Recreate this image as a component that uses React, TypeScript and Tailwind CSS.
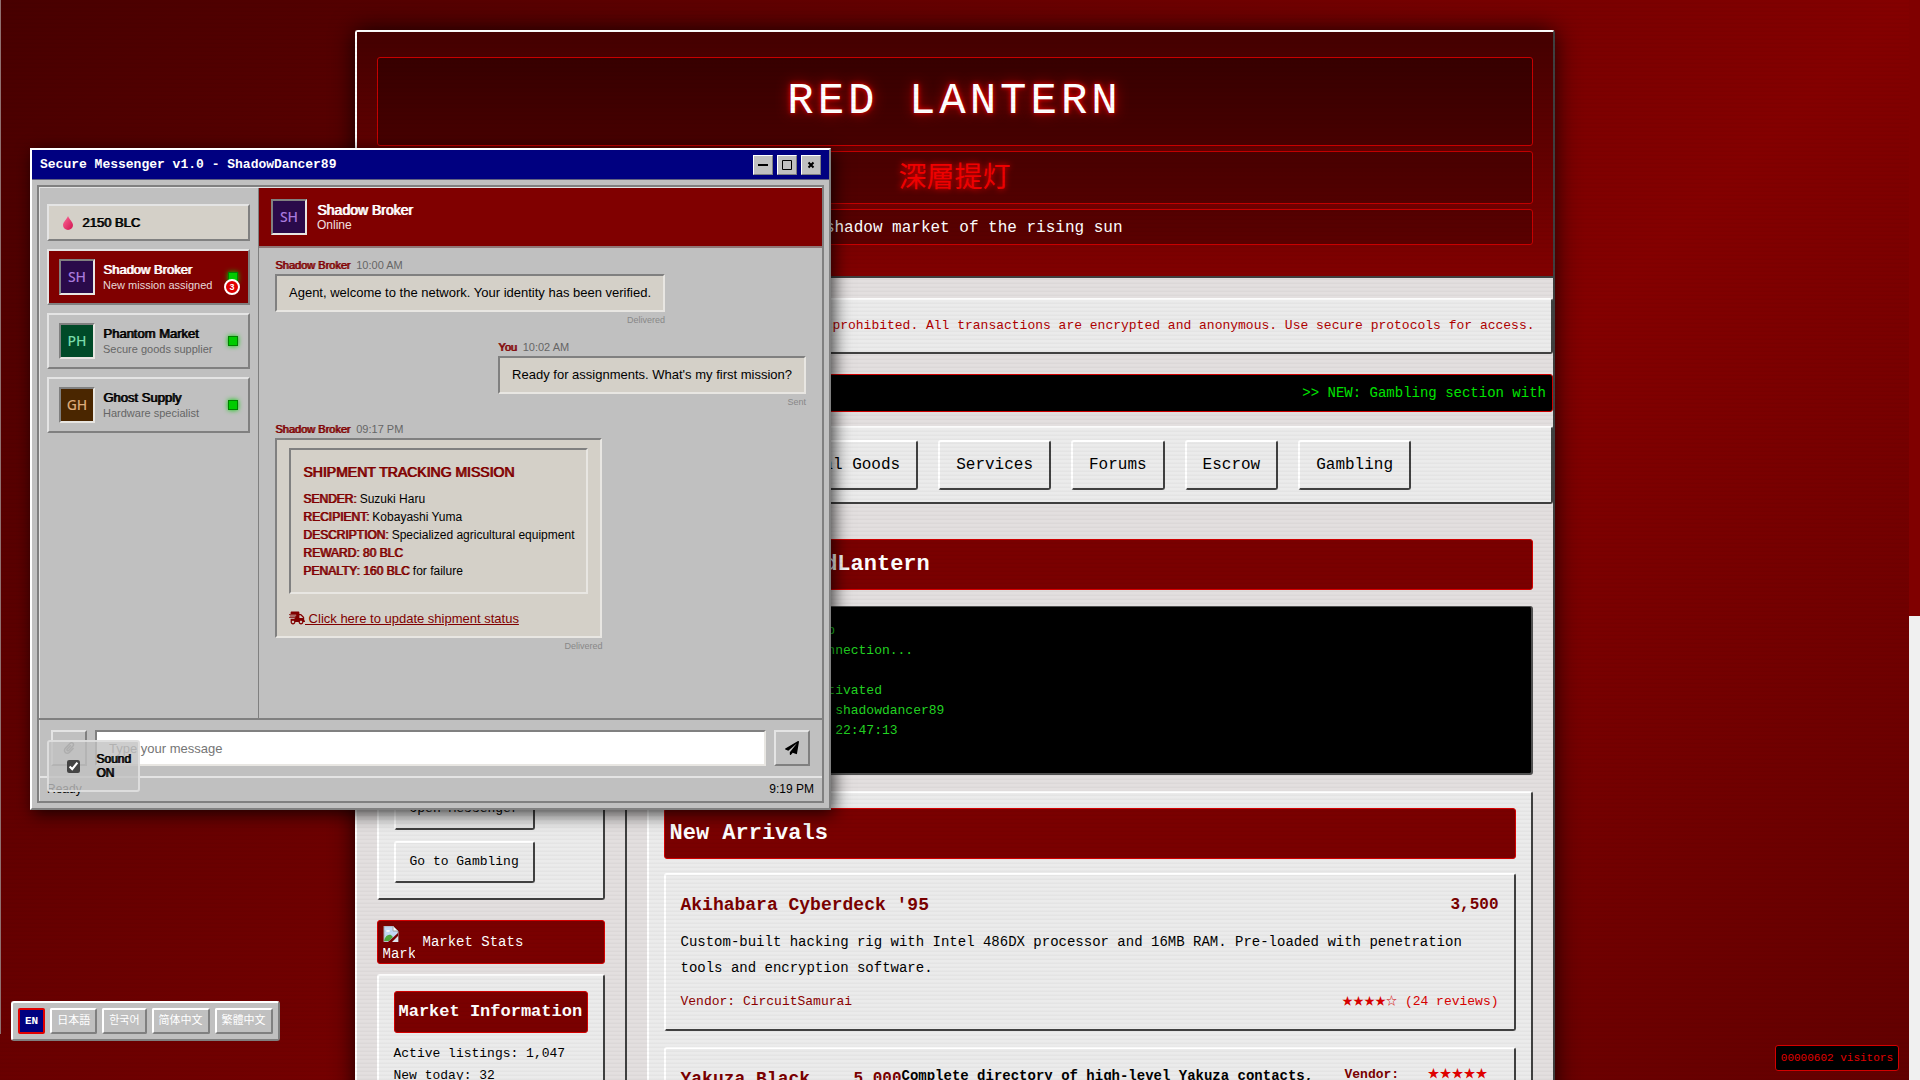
import type { ReactNode } from "react";
import { FaPaperclip, FaPaperPlane, FaShippingFast } from "react-icons/fa";

const contacts = [
  {
    initials: "SH",
    name: "Shadow Broker",
    note: "New mission assigned",
    avatar: "bg-[#2a0a4a] text-[#a879dc]",
    unread: 3,
    active: true,
  },
  {
    initials: "PH",
    name: "Phantom Market",
    note: "Secure goods supplier",
    avatar: "bg-[#004a28] text-[#79dcaa]",
    unread: 0,
    active: false,
  },
  {
    initials: "GH",
    name: "Ghost Supply",
    note: "Hardware specialist",
    avatar: "bg-[#4a2600] text-[#dcaa79]",
    unread: 0,
    active: false,
  },
];

const navItems = ["Home", "Hardware", "Electronics", "Digital Goods", "Services", "Forums", "Escrow", "Gambling"];

const languages = ["EN", "日本語", "한국어", "简体中文", "繁體中文"];

const terminalLines = [
  "RedLantern net startup",
  "Negotiating secure connection...",
  "",
  "Encryption modules activated",
  "User login confirmed: shadowdancer89",
  "Session start (local) 22:47:13",
  "",
];

const raised = "border-2 border-t-white border-l-white border-r-[#404040] border-b-[#404040]";
const outset = "border-2 border-t-[#e4e4e4] border-l-[#e4e4e4] border-r-[#808080] border-b-[#808080]";
const inset = "border-2 border-t-[#808080] border-l-[#808080] border-r-[#e8e6e2] border-b-[#e8e6e2]";
const heavy = "[text-shadow:1px_0_0_currentColor]";

function PanelHeading({ children, small }: { children: ReactNode; small?: boolean }) {
  return (
    <h2
      className={`rounded-[3px] border border-[#d40000] bg-[#7a0000] font-bold whitespace-nowrap text-white ${
        small ? "px-1 text-[17px] leading-10" : "px-[5px] text-[22px] leading-[49px]"
      }`}
    >
      {children}
    </h2>
  );
}

function BrokenImage({ alt }: { alt: string }) {
  return (
    <span className="block h-8 w-8 overflow-hidden text-sm leading-4 whitespace-nowrap">
      <svg viewBox="0 0 16 16" className="block h-4 w-4">
        <path d="M1 0h9l5 5v11H1z" fill="#c3d9f5" stroke="#a8a8a8" />
        <path d="M10 0v5h5z" fill="#fff" stroke="#a8a8a8" />
        <path d="M1 15c1-5 4-7 7-6l2 2-4 4z" fill="#4ea83c" />
        <ellipse cx="5" cy="5" rx="2" ry="1" fill="#fff" />
        <path d="M5 16 15 7v9z" fill="#7a0000" />
        <path d="m9 16 6-6v6z" fill="#dfe6ee" />
      </svg>
      <span className="block pt-1">{alt}</span>
    </span>
  );
}

function SidebarTitle({ children }: { children: string }) {
  return (
    <div className="flex h-11 items-center gap-2 rounded-[3px] border border-[#d40000] bg-[#7a0000] px-[5px] text-sm text-white">
      <BrokenImage alt={children} />
      {children}
    </div>
  );
}

function SidebarButton({ children }: { children: string }) {
  return (
    <button type="button" className={`h-[42px] rounded-[3px] bg-[#eaeaea] px-3.5 text-[13px] text-black ${raised}`}>
      {children}
    </button>
  );
}

function SiteHeader() {
  return (
    <header className="flex flex-col gap-[5px] border-b-2 border-[#404040] bg-linear-to-b from-[#440000] to-[#820000] px-5 pt-[25px] pb-[31px] text-center text-white">
      <h1 className="rounded-[3px] border border-[#c80000] bg-black/25 text-[44px] leading-[87px] tracking-[4px] [text-shadow:0_0_5px_#ff0000,0_0_14px_#c00000]">
        RED LANTERN
      </h1>
      <p className="rounded-[3px] border border-[#c80000] bg-black/25 pb-1 font-['Noto_Sans_CJK_JP',sans-serif] text-[28px] leading-[47px] text-[#f00000] [text-shadow:0_0_6px_#ff0000]">
        深層提灯
      </p>
      <p className="rounded-[3px] border border-[#c80000] bg-black/25 pt-0.5 text-base leading-8">
        The shadow market of the rising sun
      </p>
    </header>
  );
}

function Market() {
  return (
    <div className="mx-auto mt-[30px] w-full max-w-[1200px] rounded-[3px] border-2 border-t-white border-r-[#404040] border-b-[#404040] border-l-white bg-[#e3dfdf] shadow-[0_0_25px_rgba(0,0,0,0.8)]">
      <SiteHeader />

      <p
        className={`mt-5 overflow-hidden rounded-[3px] bg-[#ebebeb] pr-4 text-right text-[13px] leading-[52px] whitespace-nowrap text-[#b00000] ${raised}`}
      >
        WARNING: Unauthorized access is prohibited. All transactions are encrypted and anonymous. Use secure
        protocols for access.
      </p>

      <div className="mt-5 overflow-hidden rounded-[3px] border border-[#d40000] bg-black pl-[79%] text-sm leading-9 whitespace-nowrap text-[#00e600]">
        &gt;&gt; NEW: Gambling section with blackjack and pachinko now open
      </div>

      <nav className={`mt-3.5 flex gap-5 rounded-[3px] bg-[#ebebeb] px-2.5 py-3 ${raised}`}>
        {navItems.map((item) => (
          <a
            key={item}
            href="#"
            className={`rounded-[3px] px-4 text-base leading-[46px] whitespace-nowrap text-black ${raised}`}
          >
            {item}
          </a>
        ))}
      </nav>

      <div className="flex px-5 pt-[35px]">
        <aside className="w-[250px] shrink-0 border-r-2 border-[#404040] pr-5">
          <SidebarTitle>User Panel</SidebarTitle>
          <div className={`mt-2.5 rounded-[3px] bg-[#ebebeb] p-[15px] text-[13px] leading-[22px] ${raised}`}>
            <PanelHeading small>Account</PanelHeading>
            <div className="mt-2.5 mb-4">
              <div>User: shadowdancer89</div>
              <div>Status: Verified</div>
              <div>Balance: 2150 BLC</div>
              <div>Messages: 3</div>
              <div>Orders: 0</div>
            </div>
            <div className="flex flex-col items-start gap-[11px]">
              <SidebarButton>Open Messenger</SidebarButton>
              <SidebarButton>Go to Gambling</SidebarButton>
            </div>
          </div>

          <div className="mt-5">
            <SidebarTitle>Market Stats</SidebarTitle>
          </div>
          <div className={`mt-2.5 rounded-[3px] bg-[#ebebeb] p-[15px] text-[13px] leading-[22px] ${raised}`}>
            <PanelHeading small>Market Information</PanelHeading>
            <div className="mt-2.5">
              <div>Active listings: 1,047</div>
              <div>New today: 32</div>
              <div>Vendors online: 118</div>
            </div>
          </div>
        </aside>

        <main className="ml-5 min-w-0 flex-1">
          <PanelHeading>Welcome to RedLantern</PanelHeading>

          <div className="mt-4 rounded-[3px] border-t border-r-2 border-b-2 border-[#505050] bg-black pt-3.5 pb-3 pl-[17px] text-[13px] text-[#22d422]">
            {terminalLines.map((line, i) => (
              <div key={i} className="h-5 leading-5">
                {line}
              </div>
            ))}
          </div>

          <section className={`mt-4 rounded-[3px] bg-[#ebebeb] p-[15px] ${raised}`}>
            <PanelHeading>New Arrivals</PanelHeading>

            <article className={`mt-3.5 rounded-[3px] p-[15px] ${raised}`}>
              <div className="flex items-center justify-between leading-[30px] font-bold text-[#7a0000]">
                <h3 className="text-lg leading-[30px]">Akihabara Cyberdeck '95</h3>
                <span className="text-base leading-[30px]">3,500</span>
              </div>
              <p className="mt-[9px] text-sm leading-[26px]">
                Custom-built hacking rig with Intel 486DX processor and 16MB RAM. Pre-loaded with penetration tools
                and encryption software.
              </p>
              <div className="mt-[9px] flex justify-between text-[13px] leading-6 text-[#8c0000]">
                <span>Vendor: CircuitSamurai</span>
                <span className="text-[#d80000]">
                  <span className="text-[11px]">★★★★☆</span> (24 reviews)
                </span>
              </div>
            </article>

            <article className={`mt-4 flex rounded-[3px] p-[15px] ${raised}`}>
              <h3 className="w-[173px] text-lg leading-[30px] font-bold text-[#7a0000]">Yakuza Black Book</h3>
              <span className="w-12 text-base leading-[30px] font-bold text-[#7a0000]">5,000</span>
              <p className="w-[443px] text-sm leading-6 font-bold">
                Complete directory of high-level Yakuza contacts, with regional codes.
              </p>
              <span className="w-[83px] text-[13px] leading-[22px] font-bold text-[#7a0000]">Vendor: Oyabun</span>
              <span className="text-xs leading-[22px] text-[#e00000]">★★★★★</span>
            </article>
          </section>
        </main>
      </div>
    </div>
  );
}

function Avatar({ initials, colors }: { initials: string; colors: string }) {
  return (
    <span
      className={`flex h-9 w-9 shrink-0 items-center justify-center font-['Noto_Sans',sans-serif] text-sm font-medium ${inset} ${colors}`}
    >
      {initials}
    </span>
  );
}

interface MessageProps {
  from: string;
  time: string;
  status: string;
  own?: boolean;
  children: ReactNode;
}

function Message({ from, time, status, own, children }: MessageProps) {
  return (
    <div className={`mb-2.5 w-fit ${own ? "ml-auto" : ""}`}>
      <div className="flex gap-1.5 text-[11px] leading-[18px] text-[#666]">
        <span className={`text-[#800000] ${heavy}`}>{from}</span>
        <span>{time}</span>
      </div>
      <div className={`bg-[#d4d0c8] px-3 py-2 text-[13px] leading-[18px] ${inset}`}>{children}</div>
      <div className="text-right text-[9px] leading-4 text-[#888]">{status}</div>
    </div>
  );
}

function Field({ label, children }: { label: string; children?: ReactNode }) {
  return (
    <div>
      <span className={`text-[#800000] ${heavy}`}>{label}</span> {children}
    </div>
  );
}

function WindowButton({ label, children }: { label: string; children: ReactNode }) {
  return (
    <button
      type="button"
      aria-label={label}
      className="flex h-5 w-5 items-center justify-center border border-t-white border-r-[#808080] border-b-[#808080] border-l-white bg-[#c0c0c0]"
    >
      <svg viewBox="0 0 12 12" className="h-3 w-3" fill="none" stroke="#000">
        {children}
      </svg>
    </button>
  );
}

function DropIcon() {
  return (
    <svg viewBox="0 0 12 14" className="h-3.5 w-3">
      <defs>
        <linearGradient id="drop" x1="0" y1="0" x2="1" y2="1">
          <stop offset="0" stopColor="#ff6a9a" />
          <stop offset="1" stopColor="#d0124e" />
        </linearGradient>
      </defs>
      <path d="M6 0C5 3 1 6 1 9a5 5 0 0 0 10 0C11 6 7 3 6 0z" fill="url(#drop)" />
    </svg>
  );
}

function Messenger() {
  return (
    <section className="absolute top-[148px] left-[30px] flex h-[662px] w-[801px] flex-col border-2 border-t-white border-r-[#808080] border-b-[#808080] border-l-white bg-[#c0c0c0] font-['Liberation_Sans',Arial,sans-serif] text-black shadow-[3px_4px_16px_rgba(0,0,0,0.75)]">
      <div className="flex h-[30px] items-center gap-1 border-b border-[#606080] bg-[#000080] px-2">
        <h2 className="flex-1 font-['Liberation_Mono',monospace] text-[13px] font-bold text-white">
          Secure Messenger v1.0 - ShadowDancer89
        </h2>
        <WindowButton label="Minimize">
          <path d="M1 6h10" strokeWidth="2" />
        </WindowButton>
        <WindowButton label="Maximize">
          <path d="M1.500 1.500h9v9h-9z" />
        </WindowButton>
        <WindowButton label="Close">
          <path d="m3.500 3.500 5 5m0-5-5 5" strokeWidth="2" />
        </WindowButton>
      </div>

      <div className="m-[5px] flex min-h-0 flex-1 flex-col border-2 border-[#808080] shadow-[inset_1px_1px_0_#e4e4e4]">
        <div className="flex min-h-0 flex-1 pt-px pl-px">
          <div className="flex w-[219px] shrink-0 flex-col gap-2 border-r border-[#808080] pt-4 pr-2 pl-[7px]">
            <div className={`flex h-[37px] items-center gap-2 bg-[#d4d0c8] px-[13px] text-[13px] ${outset}`}>
              <DropIcon />
              <span className={heavy}>2150 BLC</span>
            </div>
            {contacts.map((c) => (
              <div
                key={c.name}
                className={`relative flex h-14 items-center gap-2 px-2.5 ${outset} ${
                  c.active ? "bg-[#800000] text-white" : ""
                }`}
              >
                <Avatar initials={c.initials} colors={c.avatar} />
                <div className="flex-1 whitespace-nowrap">
                  <div className={`text-[13px] leading-4 ${heavy}`}>{c.name}</div>
                  <div className={`text-[11px] leading-[15px] ${c.active ? "text-[#e8d8d8]" : "text-[#666]"}`}>
                    {c.note}
                  </div>
                </div>
                <span className="h-2.5 w-2.5 border border-[#008000] bg-[#00cc00] shadow-[0_0_5px_#00cc00]" />
                {c.unread > 0 && (
                  <span className="absolute right-2 bottom-2 flex h-4 w-4 items-center justify-center rounded-full border-2 border-white bg-[#e00000] text-[9px] leading-none font-bold">
                    {c.unread}
                  </span>
                )}
              </div>
            ))}
          </div>

          <div className="flex min-w-0 flex-1 flex-col">
            <div className="flex h-[60px] items-center gap-2.5 border-b-2 border-[#907878] bg-[#800000] px-3 text-white">
              <Avatar initials="SH" colors="bg-[#2a0a4a] text-[#a879dc]" />
              <div>
                <div className={`text-sm leading-4 ${heavy}`}>Shadow Broker</div>
                <div className="text-xs leading-[14px] text-[#f0e0e0]">Online</div>
              </div>
            </div>

            <div className="min-h-0 flex-1 px-4 pt-2">
              <Message from="Shadow Broker" time="10:00 AM" status="Delivered">
                Agent, welcome to the network. Your identity has been verified.
              </Message>
              <Message from="You" time="10:02 AM" status="Sent" own>
                Ready for assignments. What's my first mission?
              </Message>
              <Message from="Shadow Broker" time="09:17 PM" status="Delivered">
                <div className={`px-3 py-3 text-xs leading-[18px] ${inset}`}>
                  <h3 className={`mb-2 text-sm leading-5 text-[#800000] ${heavy}`}>SHIPMENT TRACKING MISSION</h3>
                  <Field label="SENDER:">Suzuki Haru</Field>
                  <Field label="RECIPIENT:">Kobayashi Yuma</Field>
                  <Field label="DESCRIPTION:">Specialized agricultural equipment</Field>
                  <Field label="REWARD: 80 BLC" />
                  <Field label="PENALTY: 160 BLC">for failure</Field>
                </div>
                <a href="#" className="mt-4 block text-[#800000] underline">
                  <FaShippingFast className="inline h-3.5 w-4 align-[-2px]" /> Click here to update shipment status
                </a>
              </Message>
            </div>
          </div>
        </div>

        <form className="flex items-center gap-2 border-t-2 border-[#808080] px-3 py-2.5">
          <button
            type="button"
            aria-label="Attach file"
            className={`flex h-9 w-9 items-center justify-center ${outset}`}
          >
            <FaPaperclip className="h-3 w-3 text-[#606060]" />
          </button>
          <input
            type="text"
            aria-label="Message"
            placeholder="Type your message"
            className={`h-9 min-w-0 flex-1 bg-white px-3 text-[13px] placeholder:text-[#757575] ${inset}`}
          />
          <button type="button" aria-label="Send" className={`flex h-9 w-9 items-center justify-center ${outset}`}>
            <FaPaperPlane className="h-3.5 w-3.5" />
          </button>
        </form>
        <div className="flex justify-between border-t-2 border-[#e4e4e4] px-2 text-xs leading-[23px]">
          <span>Ready</span>
          <span>9:19 PM</span>
        </div>
      </div>
    </section>
  );
}

function SoundToggle() {
  return (
    <label className="absolute top-[740px] left-[47px] flex items-center gap-4 rounded-[3px] border-2 border-[#e4e4e4]/80 bg-[#c0c0c0]/80 py-2.5 pr-1.5 pl-[18px] font-['Liberation_Sans',Arial,sans-serif] text-xs leading-[14px] text-black">
      <input type="checkbox" defaultChecked className="h-[13px] w-[13px] accent-[#444]" />
      <span className={`w-9 ${heavy}`}>Sound ON</span>
    </label>
  );
}

function LanguageBar() {
  return (
    <div className="absolute bottom-[39px] left-[11px] flex gap-[5px] rounded-[3px] border-2 border-t-white border-r-[#808080] border-b-[#808080] border-l-white bg-[#c0c0c0] p-[5px] font-['Liberation_Mono','Noto_Sans_CJK_JP','Noto_Sans_CJK_KR',monospace] text-[11px] text-white">
      {languages.map((lang, i) => (
        <button
          key={lang}
          type="button"
          className={`h-[26px] rounded-[2px] border-2 px-[5px] leading-none ${
            i === 0
              ? "border-[#e00000] bg-[#000080] font-bold"
              : "border-t-white border-r-[#808080] border-b-[#808080] border-l-white bg-[#c0c0c0]"
          }`}
        >
          {lang}
        </button>
      ))}
    </div>
  );
}

export default function App() {
  return (
    <div className="flex h-screen overflow-hidden font-['Liberation_Mono','Noto_Sans_CJK_JP',monospace] text-black">
      <div className="relative min-w-0 flex-1 overflow-hidden bg-[linear-gradient(135deg,#480000,#840000_50%,#480000)] bg-[length:100%_1900px]">
        <Market />
        <div className="pointer-events-none absolute inset-0 bg-[repeating-linear-gradient(0deg,rgba(0,0,0,0.03)_0px,rgba(0,0,0,0.03)_1px,transparent_2px,transparent_4px)]" />
        <div className="absolute top-0 bottom-[46px] left-0 w-px bg-[#907070]" />
        <Messenger />
        <SoundToggle />
        <LanguageBar />
        <div className="absolute right-[10px] bottom-[9px] rounded-[3px] border border-[#d40000] bg-black px-[5px] text-[11px] leading-6 text-[#e00000]">
          00000602 visitors
        </div>
      </div>
      <div className="w-[11px] shrink-0 bg-[#f0f0f0]">
        <div className="h-[57%] bg-[#800000]" />
      </div>
    </div>
  );
}
